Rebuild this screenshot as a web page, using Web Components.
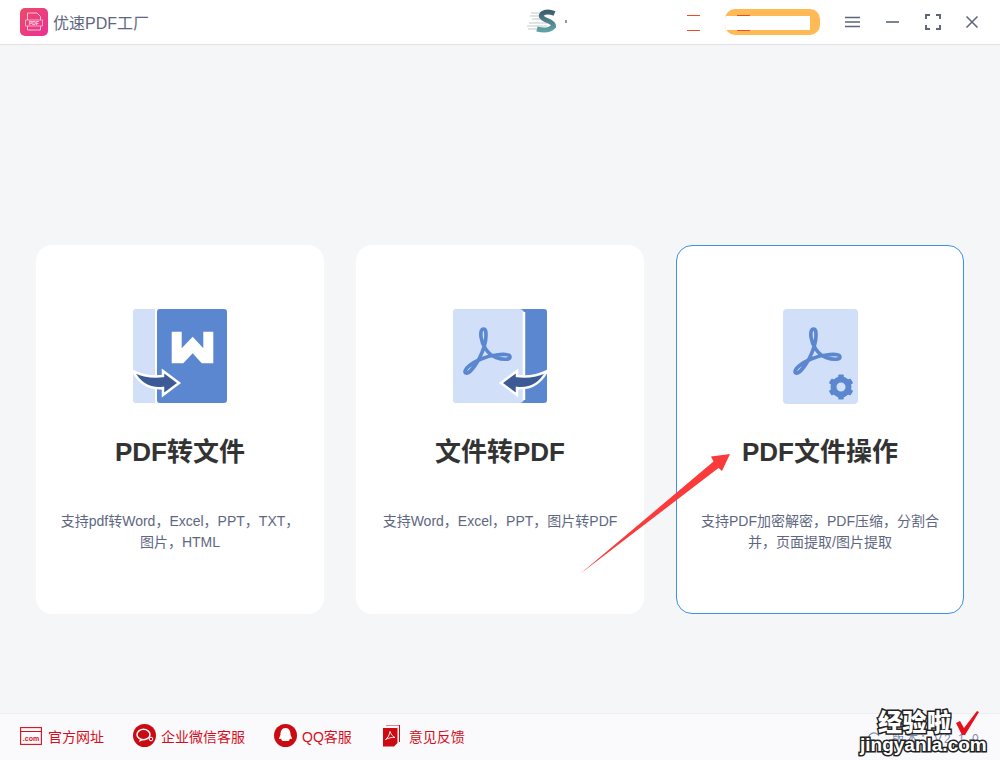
<!DOCTYPE html>
<html lang="zh"><head><meta charset="utf-8"><title>优速PDF工厂</title>
<style>
html,body{margin:0;padding:0;height:100%}
body{font-family:"Liberation Sans","Noto Sans CJK SC",sans-serif;background:#f5f6f8;overflow:hidden}
</style></head><body>
<app-shell>
  <title-bar slot="top"></title-bar>
  <feature-card title-text="PDF转文件" icon="word"><span>支持pdf转Word，Excel，PPT，TXT，<br>图片，HTML</span></feature-card>
  <feature-card title-text="文件转PDF" icon="pdf"><span>支持Word，Excel，PPT，图片转PDF</span></feature-card>
  <feature-card title-text="PDF文件操作" icon="tool" active><span>支持PDF加密解密，PDF压缩，分割合<br>并，页面提取/图片提取</span></feature-card>
  <foot-bar slot="bottom"></foot-bar>
</app-shell>
<script>
const ACRO='M30.500 20C28 20 27.500 24 28 28C29 36 35 46 43 48.500C50 51 57 51 57 48C57 45 50 45 43 46C33 47 22 52 16 57C12 60 11 64 13 64C16 65 22 57 26 50C30 42 33 32 33 27C33 23 33 20 30.500 20Z';
const acro=`<path d="${ACRO}" fill="none" stroke="#5a87d0" stroke-width="3.600" stroke-linejoin="round"/>`;
const ICONS={
word:`<svg width="94" height="94" viewBox="0 0 94 94"><path d="M3 0H26V94H3a3 3 0 0 1-3-3V3a3 3 0 0 1 3-3Z" fill="#d2dff8"/><path d="M24 4a4 4 0 0 1 4-4H91a3 3 0 0 1 3 3V91a3 3 0 0 1-3 3H28a4 4 0 0 1-4-4Z" fill="#5a87d0"/><path d="M23 0V94" stroke="#fff" stroke-width="2"/><path d="M24 4a4 4 0 0 1 4-4H40V94H28a4 4 0 0 1-4-4Z" fill="#5a87d0"/><path d="M38.700 22.700H48.700V39.300L59.700 27.700L70.300 39.300V22.700H80.300V54.300H68.700L59.700 44.300L50.300 54.300H38.700Z" fill="#fff"/><path d="M0 62Q14 69 30 67V62L46 74L30 86V79Q10 81 0 62Z" fill="#3b5a96" stroke="#fff" stroke-width="2.500" stroke-linejoin="miter"/></svg>`,
pdf:`<svg width="94" height="94" viewBox="0 0 94 94"><path d="M66 0H91a3 3 0 0 1 3 3V91a3 3 0 0 1-3 3H66Z" fill="#5a87d0"/><path d="M3 0H66a5 5 0 0 1 5.500 5V89a5 5 0 0 1-5.500 5H3a3 3 0 0 1-3-3V3a3 3 0 0 1 3-3Z" fill="#d2dff8"/><path d="M71 3V91" stroke="#fff" stroke-width="2.500"/>${acro}<path d="M94 62Q80 69 64 67V62L48 74L64 86V79Q84 81 94 62Z" fill="#3b5a96" stroke="#fff" stroke-width="2.500"/></svg>`,
tool:`<svg width="75" height="95" viewBox="0 0 75 95"><rect width="75" height="95" rx="4" fill="#d2dff8"/>${acro}<g transform="translate(58 78)" fill="#5a87d0"><circle r="7.500" fill="none" stroke="#5a87d0" stroke-width="6"/>${[0,60,120,180,240,300].map(a=>`<rect x="-2.800" y="-12.500" width="5.600" height="5" rx="1" transform="rotate(${a})"/>`).join('')}</g></svg>`
};
function def(name,html){customElements.define(name,class extends HTMLElement{
  constructor(){super();this.attachShadow({mode:'open'}).innerHTML=typeof html==='function'?html(this):html}
})}
def('app-shell',`<style>
:host{display:flex;flex-direction:column;height:760px;position:relative;overflow:hidden}
main{flex:1;box-sizing:border-box;padding:200px 36px 0;display:grid;grid-template-columns:repeat(3,288px);gap:32px;align-content:start}
.arrow{position:absolute;left:0;top:0;pointer-events:none}
</style><slot name="top"></slot><main><slot></slot></main><slot name="bottom"></slot>
<svg class="arrow" width="1000" height="760"><polygon points="580,574 713.500,461.500 711,456.500 730,454 722,471 718.500,468" fill="#fb3b3b"/></svg>`);
def('title-bar',`<style>
:host{display:block;height:45px;box-sizing:border-box;background:#fff;border-bottom:1px solid #e2e2e4}
.b{display:flex;align-items:center;height:44px;padding-left:20px}
.logo{width:28px;height:28px;flex:none}
.t{font-size:16px;color:#5e6781;margin-left:5px;width:474px;white-space:nowrap}
.s{width:30px;height:24px;flex:none;margin-top:-2px}
.dot{width:2px;height:3px;margin-left:8px;background:#8d97ac;flex:none;margin-top:-2px}
.dash{width:13px;height:16px;box-sizing:border-box;border-top:1px solid #ee4d1f;border-bottom:1px solid #ee4d1f;flex:none;margin:1px 0 0 120px}
.pill{position:relative;width:95px;height:26px;margin:0 0 0 25px;box-sizing:border-box;border-radius:10px;background:#ffba55;overflow:hidden;flex:none;padding:7px 10px 5px 0}
.pill i{display:block;height:14px;background:#fff}
.pill b{position:absolute;left:12px;top:6px;width:13px;height:16px;box-sizing:border-box;border-top:1px solid #ee4d1f;border-bottom:1px solid #ee4d1f}
.ic{flex:none;display:block}
</style><div class="b">
<svg class="logo" viewBox="0 0 28 28"><defs><linearGradient id="g" x1="0" y1="0" x2="1" y2="1"><stop offset="0" stop-color="#ee4a68"/><stop offset="1" stop-color="#ec2f96"/></linearGradient></defs><rect width="28" height="28" rx="5" fill="url(#g)"/><path d="M7.500 12V5H17L20.500 8.500V12M7.500 18V22H20.500V18" fill="none" stroke="#fbc6d4" stroke-width="1"/><path d="M5.500 12H22.500V18H5.500Z" fill="none" stroke="#fbc6d4" stroke-width=".8"/><text x="14" y="17" text-anchor="middle" font-family="Liberation Sans" font-size="5" font-weight="700" fill="#fde0e8">PDF</text></svg>
<div class="t">优速PDF工厂</div>
<svg class="s" viewBox="0 0 30 24"><defs><linearGradient id="sg" x1="0" y1="0" x2="0" y2="1"><stop offset="0" stop-color="#3f5f70"/><stop offset="1" stop-color="#5fa0a4"/></linearGradient></defs><path d="M4 4H20M3 7H16M5 10H19M2 14H22M0 17H20M1 20H23" stroke="#d5dcdc" stroke-width="1.700"/><path d="M27.500 4.500Q20 1.500 15.500 4.500Q12 8 19 11Q27 14 26.500 17.500Q21 23 10 20" fill="none" stroke="url(#sg)" stroke-width="5"/></svg>
<div class="dot"></div>
<div class="dash"></div>
<div class="pill"><i></i><b></b></div>
<svg class="ic" style="margin-left:25px" width="15" height="12" viewBox="0 0 15 12"><path d="M0 1.500H15M0 6H15M0 10.500H15" stroke="#5b6479" stroke-width="1.600"/></svg>
<svg class="ic" style="margin-left:26px" width="13" height="12" viewBox="0 0 13 12"><path d="M0 6H13" stroke="#5b6479" stroke-width="1.600"/></svg>
<svg class="ic" style="margin-left:26px" width="16" height="16" viewBox="0 0 16 16"><path d="M1 5V1H5M11 1H15V5M15 11V15H11M5 15H1V11" fill="none" stroke="#5b6479" stroke-width="1.900"/></svg>
<svg class="ic" style="margin-left:25px" width="12" height="12" viewBox="0 0 12 12"><path d="M.5 .5L11.500 11.500M11.500 .5L.5 11.500" stroke="#5b6479" stroke-width="1.500"/></svg>
</div>`);
def('feature-card',el=>`<style>
:host{display:flex;flex-direction:column;align-items:center;height:369px;box-sizing:border-box;background:#fff;border-radius:16px;padding-top:64px;text-align:center}
:host([active]){border:1px solid #3d8fe8;padding-top:63px}
.i{height:95px;display:flex;justify-content:center}
svg{display:block}
h2{margin:30px 0 0;font-size:26px;line-height:36px;font-weight:700;color:#333;white-space:nowrap}
p{margin:41px 0 0;font-size:14px;line-height:21px;color:#5e6781;white-space:nowrap}
</style><div class="i">${ICONS[el.getAttribute('icon')]}</div><h2>${el.getAttribute('title-text')}</h2><p><slot></slot></p>`);
def('foot-bar',`<style>
:host{display:block;position:relative;height:47px;box-sizing:border-box;background:#fafafc;border-top:1px solid #eeeff3}
.b{display:flex;align-items:center;height:43px;padding-left:20px;font-size:14px;color:#d40f1c;white-space:nowrap}
.it{display:flex;align-items:center;flex:none}
svg{display:block;flex:none}
.ver{position:absolute;left:892px;top:15px;font-size:12px;letter-spacing:2px;color:#7c8cb0;white-space:nowrap}
.ring{position:absolute;left:868px;top:17px}
.wm{position:absolute;left:860px;top:-6px;width:130px;font-family:"Noto Sans CJK SC",sans-serif;font-weight:900;color:#fff;-webkit-text-stroke:3px #222;paint-order:stroke fill;white-space:nowrap}
.wm div{paint-order:stroke fill}
.a{font-size:24px;line-height:26px;margin-left:18px;letter-spacing:.5px}
.c{font-family:"Liberation Sans",sans-serif;font-size:19px;line-height:20px;font-weight:700;margin-top:1px}
.chk{position:absolute;left:955px;top:-4px}
</style><div class="b">
<div class="it"><svg width="22" height="18" viewBox="0 0 22 18"><rect x=".6" y=".6" width="20.800" height="16.800" fill="none" stroke="#d40f1c" stroke-width="1.100"/><path d="M1 4.500H21" stroke="#d40f1c" stroke-width="1"/><text x="11" y="14" text-anchor="middle" font-family="Liberation Sans" font-size="7" font-weight="700" fill="#d40f1c">.com</text></svg><span style="margin-left:6px">官方网址</span></div>
<div class="it" style="margin-left:29px"><svg width="23" height="23" viewBox="0 0 23 23"><circle cx="11.500" cy="11.500" r="11.500" fill="#cc0a12"/><ellipse cx="10.500" cy="10.500" rx="6.500" ry="5.200" fill="none" stroke="#fff" stroke-width="1.500"/><path d="M7 15L6 18L10 16" fill="#fff"/><circle cx="18" cy="15" r="1.800" fill="none" stroke="#fff"/></svg><span style="margin-left:5px">企业微信客服</span></div>
<div class="it" style="margin-left:29px"><svg width="23" height="23" viewBox="0 0 23 23"><circle cx="11.500" cy="11.500" r="11.500" fill="#cc0a12"/><path d="M11.500 4C7.500 4 6.500 7.500 6.500 10.500L5 14.500C5.500 15.500 6.500 15 7 14.500C7.500 16 8 16.500 8.500 17H14.500C15 16.500 15.500 16 16 14.500C16.500 15 17.500 15.500 18 14.500L16.500 10.500C16.500 7.500 15.500 4 11.500 4Z" fill="#fff"/></svg><span style="margin-left:5px">QQ客服</span></div>
<div class="it" style="margin-left:31px"><svg width="17" height="22" viewBox="0 0 17 22"><path d="M3 0H16.500V17" fill="none" stroke="#cc0a12"/><path d="M0 3H14.500V18L11 21.500H0Z" fill="#cc0a12"/><path d="M7 6.500C6.500 9.500 5 13 2.500 14.500C5.500 13 9 12 12 12.500C9.500 11.500 8 9 7 6.500Z" fill="none" stroke="#fff" stroke-width=".9"/></svg><span style="margin-left:9px">意见反馈</span></div>
</div>
<svg class="ring" width="14" height="12" viewBox="0 0 14 12"><path d="M1 10A5.500 5.500 0 0 1 11 5" fill="none" stroke="#7c8cb0" stroke-width="1.200"/></svg>
<div class="ver">版本：V2.1.0</div>
<div class="wm"><div class="a">经验啦</div><div class="c">jingyanla.com</div></div>
<svg class="chk" width="24" height="26" viewBox="0 0 24 26"><path d="M1 13L5 11L9 18L22 1L24 2L10 25H7Z" fill="#e8101c"/></svg>`);
</script>
</body></html>
